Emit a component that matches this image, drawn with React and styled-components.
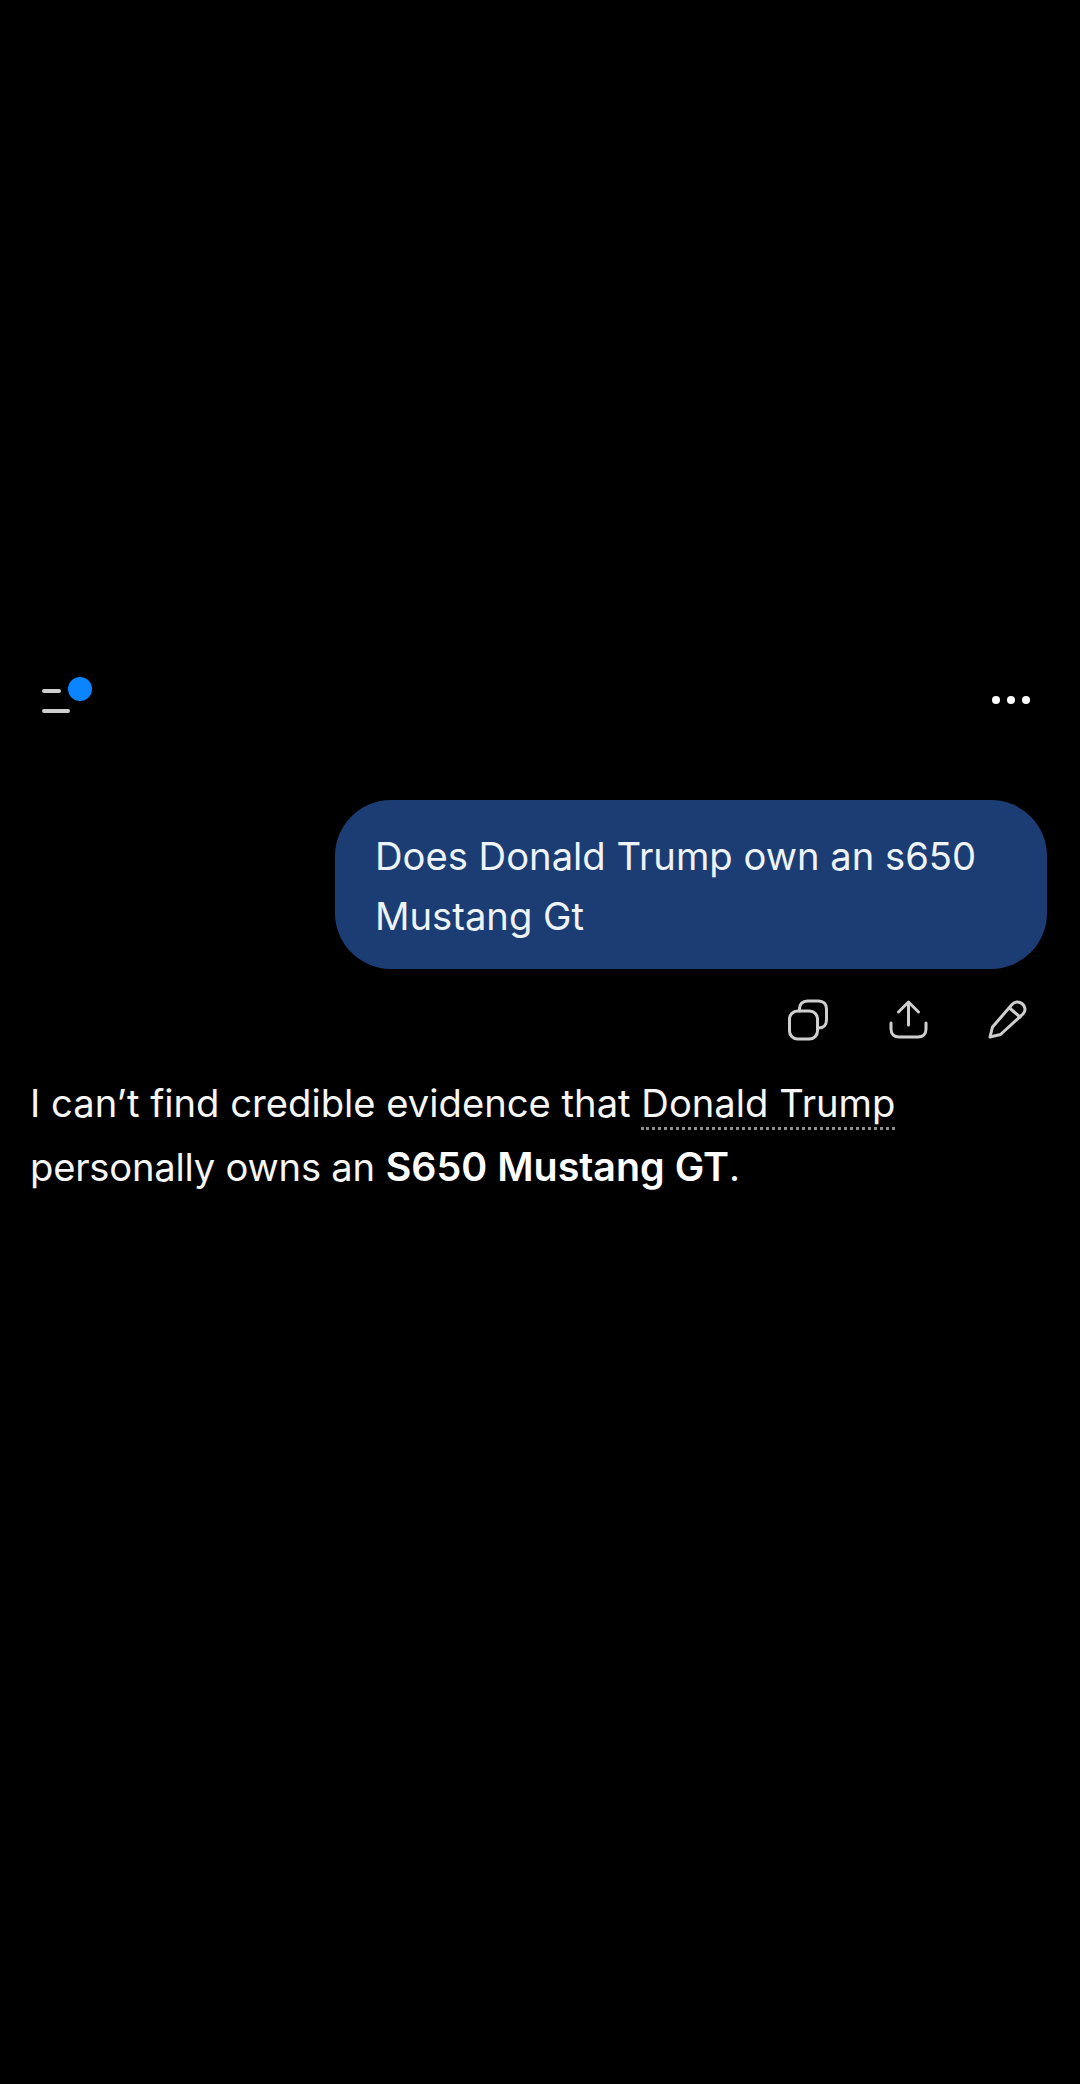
import React from 'react';
import styled, { createGlobalStyle } from 'styled-components';

const GlobalStyle = createGlobalStyle`
  html, body {
    margin: 0;
    background: #000;
  }
`;

const App = () => {
  return (
    <>
      <GlobalStyle />
      <Wrapper>
        <Header>
          <MenuButton>
            <MenuLine $width={19} />
            <MenuLine $width={28} />
            <Dot />
          </MenuButton>
          <MoreButton>
            <MoreDot />
            <MoreDot />
            <MoreDot />
          </MoreButton>
        </Header>
        <Bubble>Does Donald Trump own an s650 Mustang Gt</Bubble>
        <Actions>
          <IconButton>
            <svg width="44" height="44" viewBox="0 0 44 44" fill="none" stroke="#cfcfcf" strokeWidth="3" strokeLinecap="round" strokeLinejoin="round">
              <rect x="3.500" y="13" width="28" height="28" rx="8" />
              <path d="M13.500 13v-2c0-5 3-8 8-8h11c5 0 8 3 8 8v11c0 5-3 8-8 8h-1" />
            </svg>
          </IconButton>
          <IconButton>
            <svg width="44" height="44" viewBox="0 0 44 44" fill="none" stroke="#cfcfcf" strokeWidth="3" strokeLinecap="round" strokeLinejoin="round">
              <path d="M22.500 27V5" />
              <path d="M12.500 14l10-10 10 10" />
              <path d="M5 25v6c0 5 3 8 8 8h19c5 0 8-3 8-8v-6" />
            </svg>
          </IconButton>
          <IconButton>
            <svg width="44" height="44" viewBox="0 0 44 44" fill="none" stroke="#cfcfcf" strokeWidth="3" strokeLinecap="round" strokeLinejoin="round">
              <path d="M4 39l2.500-10L26 6.500c2.500-3 7-3.500 10.500-.5 3 2.500 3.500 7 .5 10L14.500 36.500z" />
              <path d="M23.500 10L34 19" />
            </svg>
          </IconButton>
        </Actions>
        <Answer>
          I can’t find credible evidence that <Entity>Donald Trump</Entity> <Lead>personally owns an</Lead> <b>S650 Mustang GT</b>.
        </Answer>
      </Wrapper>
    </>
  );
};

export default App;

const Wrapper = styled.div`
  width: 1080px;
  height: 2084px;
  box-sizing: border-box;
  padding-top: 676px;
  background-color: #000;
  color: #fff;
  font-family: Inter, "Liberation Sans", sans-serif;
  overflow: hidden;
`;
const Header = styled.div`
  display: flex;
  justify-content: space-between;
  align-items: flex-start;
  padding: 0 50px 0 42px;
  height: 124px;
`;
const MenuButton = styled.div`
  position: relative;
  display: flex;
  flex-direction: column;
  gap: 16px;
  padding-top: 13px;
`;
const MenuLine = styled.div`
  width: ${(props) => props.$width}px;
  height: 4px;
  border-radius: 2px;
  background-color: #cfcfcf;
`;
const Dot = styled.div`
  position: absolute;
  left: 26px;
  top: 1px;
  width: 24px;
  height: 24px;
  border-radius: 50%;
  background-color: #0a84ff;
`;
const MoreButton = styled.div`
  display: flex;
  gap: 7px;
  padding-top: 20px;
`;
const MoreDot = styled.div`
  width: 8px;
  height: 8px;
  border-radius: 50%;
  background-color: #fff;
`;
const Bubble = styled.div`
  box-sizing: border-box;
  width: 712px;
  height: 169px;
  margin-left: 335px;
  padding: 26px 40px;
  border-radius: 56px;
  background-color: #1c3d74;
  font-size: 38.2px;
  line-height: 60px;
  color: #eef3f8;
`;
const Actions = styled.div`
  display: flex;
  justify-content: flex-end;
  gap: 56px;
  padding: 29px 50px 0 0;
`;
const IconButton = styled.div`
  width: 44px;
  height: 44px;
`;
const Answer = styled.div`
  width: 930px;
  margin-top: 29px;
  padding-left: 30px;
  font-size: 38.2px;
  line-height: 64px;
  color: #f6f6f6;
  b {
    font-weight: 600;
    font-size: 39.4px;
    color: #fff;
  }
`;
const Lead = styled.span`
  letter-spacing: -0.22px;
`;
const Entity = styled.span`
  border-bottom: 3px dotted #8f8f8f;
  padding-bottom: 1px;
`;
